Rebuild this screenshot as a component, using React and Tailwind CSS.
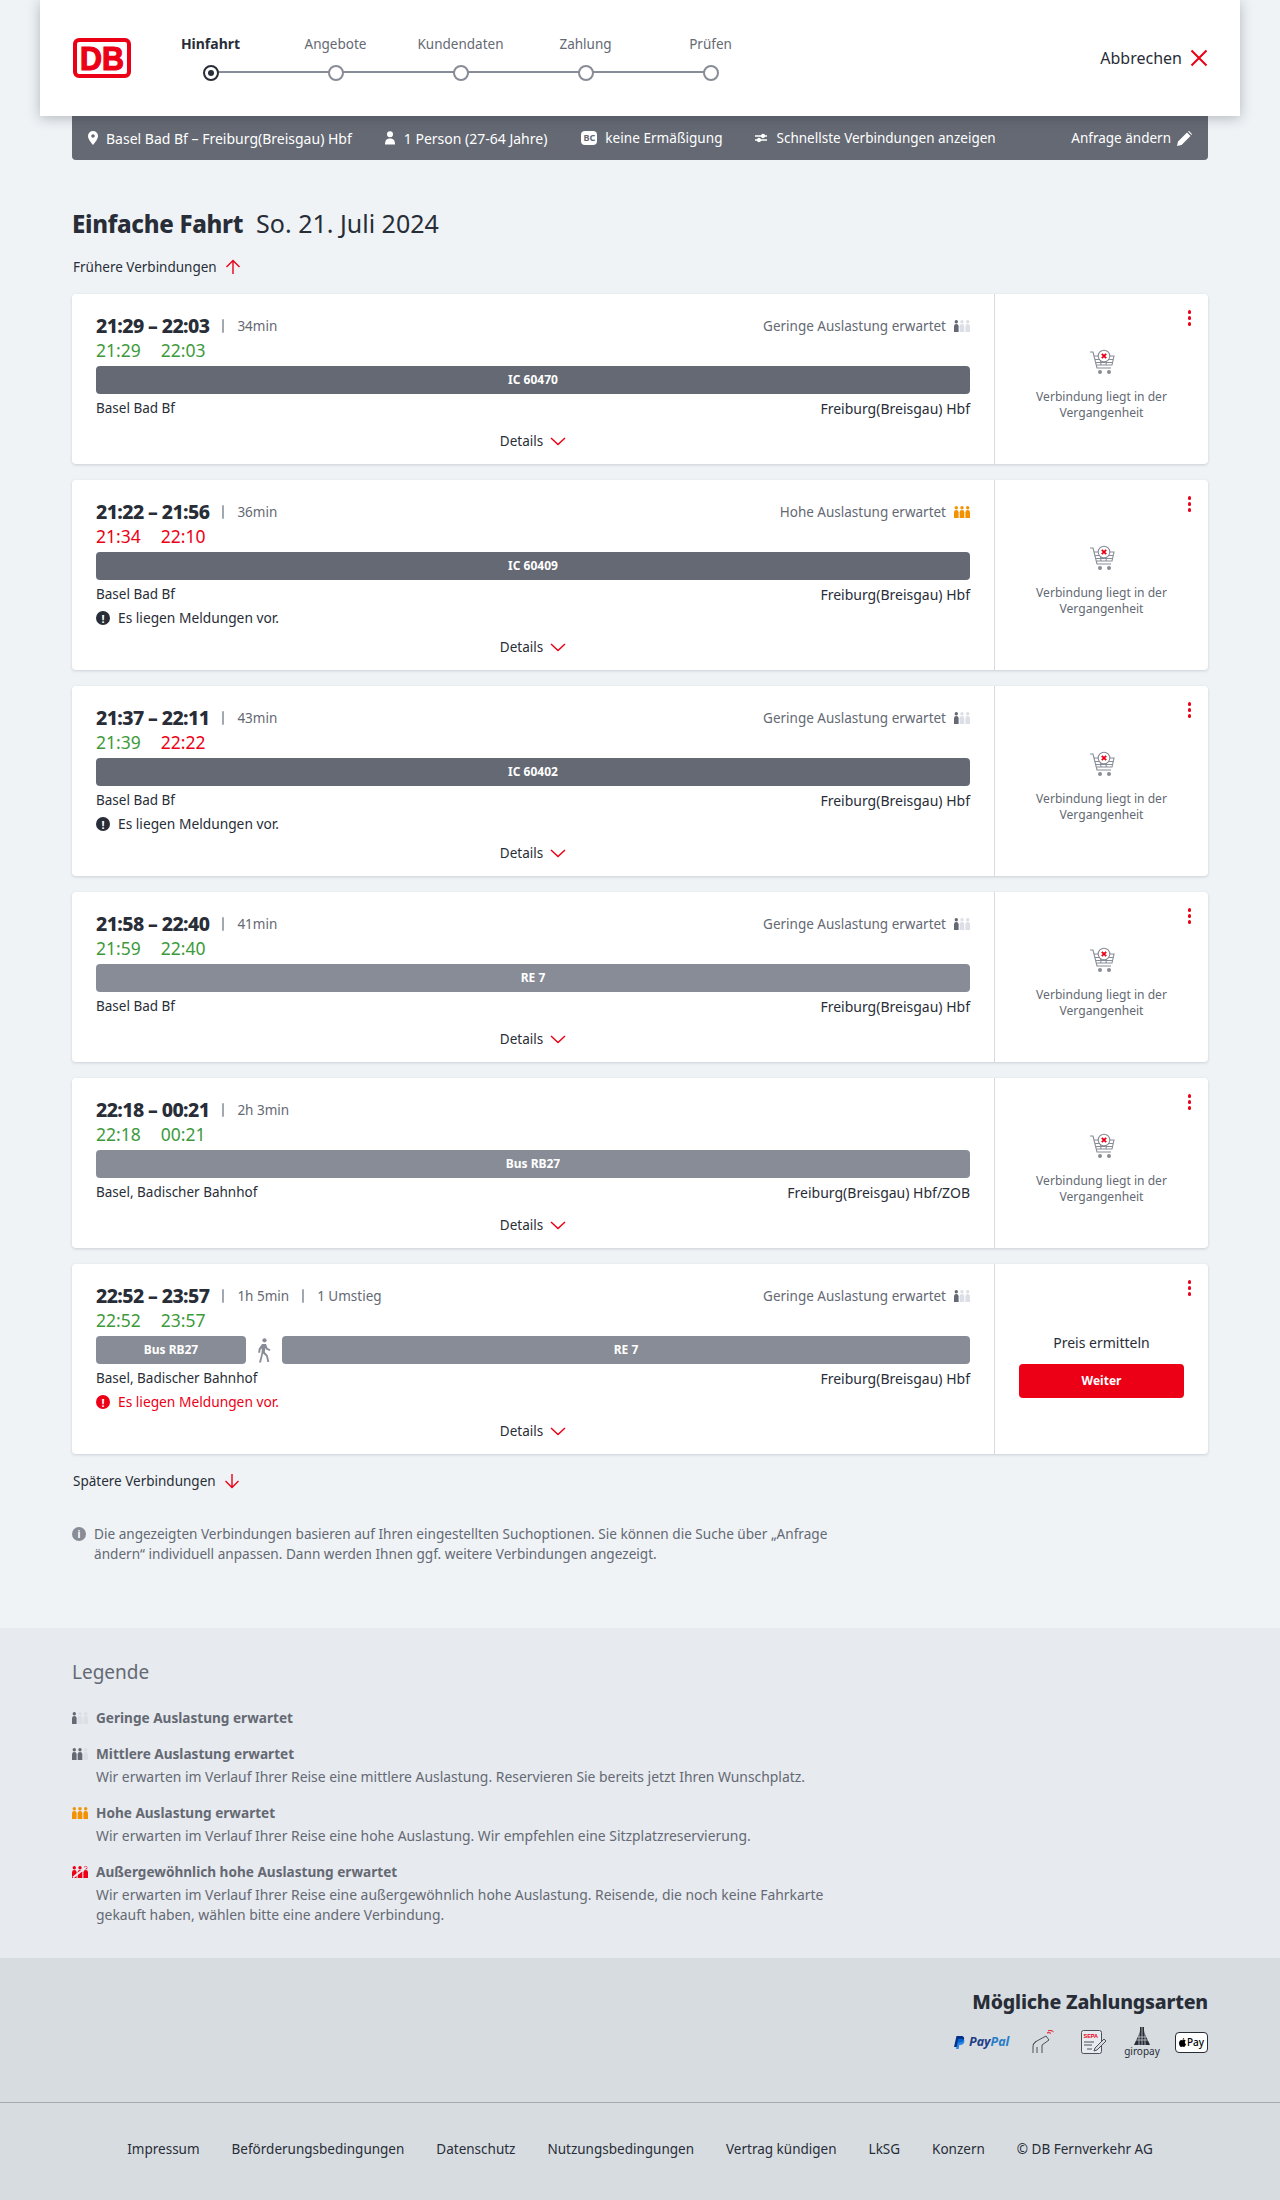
import React from "react";

const RED = "#ec0016";

const connections = [
  { time: "21:29 – 22:03", dur: "34min", load: "low", a: ["21:29", "g"], b: ["22:03", "g"], train: "IC 60470", dark: true, from: "Basel Bad Bf", to: "Freiburg(Breisgau) Hbf" },
  { time: "21:22 – 21:56", dur: "36min", load: "high", a: ["21:34", "r"], b: ["22:10", "r"], train: "IC 60409", dark: true, from: "Basel Bad Bf", to: "Freiburg(Breisgau) Hbf", msg: "dark" },
  { time: "21:37 – 22:11", dur: "43min", load: "low", a: ["21:39", "g"], b: ["22:22", "r"], train: "IC 60402", dark: true, from: "Basel Bad Bf", to: "Freiburg(Breisgau) Hbf", msg: "dark" },
  { time: "21:58 – 22:40", dur: "41min", load: "low", a: ["21:59", "g"], b: ["22:40", "g"], train: "RE 7", from: "Basel Bad Bf", to: "Freiburg(Breisgau) Hbf" },
  { time: "22:18 – 00:21", dur: "2h 3min", a: ["22:18", "g"], b: ["00:21", "g"], train: "Bus RB27", from: "Basel, Badischer Bahnhof", to: "Freiburg(Breisgau) Hbf/ZOB" },
  { time: "22:52 – 23:57", dur: "1h 5min", extra: "1 Umstieg", load: "low", a: ["22:52", "g"], b: ["23:57", "g"], train: "RE 7", bus: "Bus RB27", from: "Basel, Badischer Bahnhof", to: "Freiburg(Breisgau) Hbf", msg: "red", open: true },
];

const Logo = () => (
  <svg width="58" height="40" viewBox="0 0 58 40" className="shrink-0">
    <rect x="2" y="2" width="54" height="36" rx="4" fill="#fff" stroke={RED} strokeWidth="4" />
    <text x="29" y="31.500" textAnchor="middle" textLength="44" lengthAdjust="spacingAndGlyphs" fontFamily="'Liberation Sans', sans-serif" fontWeight="700" fontSize="33" fill={RED} stroke={RED} strokeWidth="1.200">DB</text>
  </svg>
);

const Person = ({ x, fill }) => (
  <g fill={fill}>
    <circle cx={x + 2.3} cy="1.7" r="1.7" />
    <path d={`M${x} 6.2a2.3 2.3 0 0 1 4.6 0V12H${x}z`} />
  </g>
);

const Load = ({ level }) => {
  const on = level === "high" ? "#f39200" : level === "extreme" ? RED : "#646973";
  const count = level === "low" ? 1 : level === "mid" ? 2 : 3;
  const off = "#dcdfe5";
  return (
    <svg width="16" height="12" viewBox="0 0 16 12" className="shrink-0">
      <Person x={0} fill={on} />
      <Person x={5.7} fill={count > 1 ? on : off} />
      <Person x={11.4} fill={count > 2 ? on : off} />
      {level === "extreme" && (
        <path d="M1 11.5 14.5 1" stroke="#e7eaef" strokeWidth="2" />
      )}
    </svg>
  );
};

const Chevron = () => (
  <svg width="16" height="9" viewBox="0 0 16 9" fill="none" stroke={RED} strokeWidth="1.5">
    <path d="M1 1l7 6.5L15 1" />
  </svg>
);

const Arrow = ({ down }) => (
  <svg width="16" height="16" viewBox="0 0 16 16" fill="none" stroke={RED} strokeWidth="1.4" className={down ? "rotate-180" : ""}>
    <path d="M8 15V1.5M1.5 8 8 1.5 14.5 8" />
  </svg>
);

const Kebab = () => (
  <div className="absolute top-4 right-[17px] flex flex-col gap-[2.5px]">
    <span className="w-[3.5px] h-[3.5px] rounded-full bg-[#ec0016]" />
    <span className="w-[3.5px] h-[3.5px] rounded-full bg-[#ec0016]" />
    <span className="w-[3.5px] h-[3.5px] rounded-full bg-[#ec0016]" />
  </div>
);

const Cart = () => (
  <svg width="26" height="26" viewBox="0 0 26 26" fill="none" stroke="#878c96" strokeWidth="1.1">
    <path d="M1 3h3l4 16h14" />
    <path d="M5 7h20l-2 9H7.5M6 10.5h18M7 13.5h17M11 7l1 9M18 7l-1 9" />
    <circle cx="15" cy="7" r="5.8" fill="#fff" />
    <path d="M12.8 4.8l4.4 4.4M17.2 4.8l-4.4 4.4" stroke={RED} strokeWidth="1.8" />
    <circle cx="11" cy="23" r="2" fill="#878c96" stroke="none" />
    <circle cx="20" cy="23" r="2" fill="#878c96" stroke="none" />
  </svg>
);

const Walk = () => (
  <svg width="14" height="25" viewBox="0 0 14 25" fill="#878c96">
    <circle cx="7.5" cy="2.3" r="2.1" />
    <path d="M5 6h4l1.5 4 3 1.5-.7 1.5-3.6-1.600-.8-1.400-.6 4 3 3.400 1.500 6.600H10.400l-1.300-5.700-3-2.900L4 24.500H2l2.300-8.500.7-5.500-1.500 1.200-.4 3H1.200l.5-4z" />
  </svg>
);

const AlertDot = ({ color }) => (
  <span className="w-3.5 h-3.5 rounded-full flex items-center justify-center shrink-0 text-white text-[11px] font-bold leading-none" style={{ backgroundColor: color }}>!</span>
);

const Sep = () => <span className="block w-0.5 h-3.5 bg-[#a3a7af] rounded-sm" />;

const Step = ({ label, active, last }) => (
  <div className="w-[125px] flex flex-col items-center relative">
    <span className={`leading-6 h-6 -mt-[1px] ${active ? "text-[14px] font-bold text-[#282d37]" : "text-[13.5px] text-[#646973]"}`}>{label}</span>
    {!last && <span className="absolute left-[62px] top-[38px] w-[125px] h-0.5 bg-[#878c96]" />}
    <span className={`relative mt-[9px] w-4 h-4 rounded-full border-2 bg-white flex items-center justify-center ${active ? "border-[#282d37]" : "border-[#878c96]"}`}>
      {active && <span className="w-1.5 h-1.5 rounded-full bg-[#282d37]" />}
    </span>
  </div>
);

const Header = () => (
  <header className="relative z-10 mx-10 h-[116px] bg-white shadow-[0_2px_12px_rgba(40,45,55,0.3)] flex items-center pl-[33px] pr-8">
    <Logo />
    <div className="flex ml-[17px] -mt-[2px]">
      <Step label="Hinfahrt" active />
      <Step label="Angebote" />
      <Step label="Kundendaten" />
      <Step label="Zahlung" />
      <Step label="Prüfen" last />
    </div>
    <div className="ml-auto flex items-center gap-[8px] text-[16px] text-[#282d37]">
      Abbrechen
      <svg width="18" height="18" viewBox="0 0 18 18" stroke={RED} strokeWidth="2"><path d="M1.500 1.500l15 15M16.500 1.500l-15 15" /></svg>
    </div>
  </header>
);

const SearchBar = () => (
  <div className="mx-[72px] h-11 bg-[#646973] rounded-b text-white text-[14px] flex items-center pl-4 pr-4">
    <svg width="10" height="14" viewBox="0 0 10 14" fill="#fff"><path fillRule="evenodd" d="M5 0a5 5 0 0 1 5 5c0 3-3 6.500-5 9-2-2.500-5-6-5-9a5 5 0 0 1 5-5zm0 3.200a1.800 1.800 0 1 0 0 3.600 1.800 1.800 0 0 0 0-3.600z" /></svg>
    <span className="ml-2">Basel Bad Bf – Freiburg(Breisgau) Hbf</span>
    <svg className="ml-[32px]" width="12" height="14" viewBox="0 0 12 14" fill="#fff"><circle cx="6" cy="3.200" r="3" /><path d="M1 13.500c0-4 1.500-6 5-6s5 2 5 6z" /></svg>
    <span className="ml-2">1 Person (27-64 Jahre)</span>
    <span className="ml-[34px] w-4 h-3.5 bg-white rounded-sm text-[#646973] text-[9px] font-bold leading-[14px] text-center">BC</span>
    <span className="ml-2 text-[13.600px]">keine Ermäßigung</span>
    <svg className="ml-[32px]" width="12" height="10" viewBox="0 0 12 10" fill="none" stroke="#fff" strokeWidth="1.300"><path d="M0 3h12M0 7h12" /><circle cx="8" cy="3" r="1.500" fill="#fff" /><circle cx="4" cy="7" r="1.500" fill="#fff" /></svg>
    <span className="ml-[10px] text-[13.500px]">Schnellste Verbindungen anzeigen</span>
    <span className="ml-auto text-[13.500px]">Anfrage ändern</span>
    <svg className="ml-[6px]" width="15" height="15" viewBox="0 0 15 15" fill="#fff"><path d="M0 15l1-4.500L10 1.500 13.500 5l-9 9zM11 .5l1-.5 3 3-.5 1z" /></svg>
  </div>
);

const Card = ({ c }) => (
  <div className="bg-white rounded flex shadow-[0_1px_3px_rgba(40,45,55,0.18)]">
    <div className="w-[922px] px-6 pt-5 pb-[13px] flex flex-col">
      <div className="h-6 flex items-center">
        <span className="text-[19.500px] font-extrabold text-[#282d37] tracking-[-0.6px]">{c.time}</span>
        <span className="mx-[13px]"><Sep /></span>
        <span className="text-[13.500px] text-[#646973]">{c.dur}</span>
        {c.extra && <span className="mx-[13px]"><Sep /></span>}
        {c.extra && <span className="text-[13.500px] text-[#646973]">{c.extra}</span>}
        {c.load && (
          <span className="ml-auto flex items-center gap-2 text-[13.500px] text-[#646973]">
            {c.load === "high" ? "Hohe Auslastung erwartet" : "Geringe Auslastung erwartet"}
            <Load level={c.load} />
          </span>
        )}
      </div>
      <div className="h-6 flex items-center gap-5 text-[17.500px]">
        <span className={c.a[1] === "g" ? "text-[#3d9a3a]" : "text-[#ec0016]"}>{c.a[0]}</span>
        <span className={c.b[1] === "g" ? "text-[#3d9a3a]" : "text-[#ec0016]"}>{c.b[0]}</span>
      </div>
      <div className="mt-1 flex items-center">
        {c.bus && (
          <>
            <div className="w-[150px] h-7 rounded bg-[#878c96] text-white text-[12px] font-bold flex items-center justify-center">{c.bus}</div>
            <div className="w-9 flex justify-center"><Walk /></div>
          </>
        )}
        <div className={`flex-1 h-7 rounded text-white text-[12px] font-bold flex items-center justify-center ${c.dark ? "bg-[#646973]" : "bg-[#878c96]"}`}>{c.train}</div>
      </div>
      <div className="mt-1 h-5 flex items-center justify-between text-[#282d37]">
        <span className="text-[13.500px]">{c.from}</span>
        <span className="text-[14px]">{c.to}</span>
      </div>
      {c.msg && (
        <div className={`mt-1 h-5 flex items-center gap-2 text-[13.750px] ${c.msg === "red" ? "text-[#ec0016]" : "text-[#282d37]"}`}>
          <AlertDot color={c.msg === "red" ? RED : "#282d37"} />
          Es liegen Meldungen vor.
        </div>
      )}
      <div className={`${c.msg ? "mt-[9px]" : "mt-[13px]"} h-5 flex items-center justify-center gap-[7px] text-[13.500px] text-[#282d37]`}>
        Details
        <Chevron />
      </div>
    </div>
    <div className="relative flex-1 border-l border-[#d7dce1] flex flex-col items-center justify-center">
      <Kebab />
      {c.open ? (
        <div className="w-full px-6 flex flex-col items-center pt-[12px]">
          <span className="text-[14px] text-[#282d37] h-5 leading-5">Preis ermitteln</span>
          <span className="mt-[11px] w-[165px] h-[34px] rounded bg-[#ec0016] text-white text-[12px] font-bold flex items-center justify-center">Weiter</span>
        </div>
      ) : (
        <div className="flex flex-col items-center pt-[12px]">
          <Cart />
          <p className="mt-[14px] w-[150px] text-center text-[12.100px] leading-4 text-[#646973]">Verbindung liegt in der Vergangenheit</p>
        </div>
      )}
    </div>
  </div>
);

const LegendItem = ({ level, title, children }) => (
  <div>
    <div className="h-5 flex items-center gap-2 text-[13.600px] font-bold text-[#646973]">
      <Load level={level} />
      {title}
    </div>
    {children && <p className="pl-6 mt-[3px] text-[13.900px] leading-5 text-[#646973]">{children}</p>}
  </div>
);

const Legend = () => (
  <section className="bg-[#e7eaef] h-[330px] px-[72px] pt-[32px]">
    <h2 className="text-[19px] leading-6 text-[#646973]">Legende</h2>
    <div className="mt-[24px] flex flex-col gap-4">
      <LegendItem level="low" title="Geringe Auslastung erwartet" />
      <LegendItem level="mid" title="Mittlere Auslastung erwartet">
        Wir erwarten im Verlauf Ihrer Reise eine mittlere Auslastung. Reservieren Sie bereits jetzt Ihren Wunschplatz.
      </LegendItem>
      <LegendItem level="high" title="Hohe Auslastung erwartet">
        Wir erwarten im Verlauf Ihrer Reise eine hohe Auslastung. Wir empfehlen eine Sitzplatzreservierung.
      </LegendItem>
      <LegendItem level="extreme" title="Außergewöhnlich hohe Auslastung erwartet">
        Wir erwarten im Verlauf Ihrer Reise eine außergewöhnlich hohe Auslastung. Reisende, die noch keine Fahrkarte<br />
        gekauft haben, wählen bitte eine andere Verbindung.
      </LegendItem>
    </div>
  </section>
);

const PayPal = () => (
  <div className="flex items-center gap-1 w-14 h-3.5">
    <svg width="11" height="13" viewBox="0 0 11 13" className="shrink-0">
      <path d="M2.500 0H7c3 0 3.500 2 3 3.500C9.300 5.800 7.500 6.500 5.500 6.500H4L3 11H0z" fill="#003087" />
      <path d="M4 3h4c1.800 0 2.800 1.200 2.300 3-.5 2-2 3-4 3H5.300L4.600 13H2z" fill="#0070e0" opacity="0.8" />
    </svg>
    <span className="text-[12.500px] font-bold italic leading-none text-[#1f3f88]">Pay<span className="text-[#2a7cc7]">Pal</span></span>
  </div>
);

const Payments = () => (
  <section className="bg-[#d7dce1] h-[145px] px-[72px] pt-[32px] flex flex-col items-end border-b border-[#a5a9b0]">
    <h2 className="text-[19.500px] leading-6 font-extrabold tracking-[-0.2px] text-[#282d37]">Mögliche Zahlungsarten</h2>
    <div className="mt-[13px] h-[30px] flex items-center">
      <PayPal />
      <svg className="ml-[22px]" width="22" height="24" viewBox="0 0 22 24" fill="none" stroke="#4b505a" strokeWidth="1">
        <path d="M1 23v-6c0-3 1-4 3-5.500L14 6l3 4-7 5v8M5 23v-6M1 15l3-4" />
        <path d="M15 3c1.500-.5 3-.5 4 .5M16 .8c2-.5 4-.3 5.500 1" stroke={RED} />
      </svg>
      <svg className="ml-[27px]" width="26" height="24" viewBox="0 0 26 24" fill="none" stroke="#4b505a" strokeWidth="1">
        <rect x=".5" y=".5" width="20" height="23" rx="2" fill="#e7eaef" />
        <text x="2.500" y="8" fontSize="5.500" fontWeight="700" fill={RED} stroke="none" fontFamily="'Liberation Sans', sans-serif">SEPA</text>
        <path d="M3 12h10M3 15h8M6 19h5" />
        <path d="M14 18l9-9 2 2-9 9-3 1z" fill="#d7dce1" />
      </svg>
      <div className="ml-[17px] w-[36px] flex flex-col items-center">
        <svg width="16" height="18" viewBox="0 0 16 18" fill="#282d37">
          <path d="M6 0h4v4l1 3 5 11H0L5 7l1-3z" />
          <path d="M2 10h12M1 13h14M5 5v13M8 0v18M11 5v13" stroke="#d7dce1" strokeWidth=".7" />
        </svg>
        <span className="text-[10px] leading-3 text-[#282d37]">giropay</span>
      </div>
      <div className="ml-[15px] w-[33px] h-[21px] bg-white border border-[#282d37] rounded-sm flex items-center justify-center gap-[1px] text-[10px] font-medium leading-none text-black">
        <svg width="7" height="9" viewBox="0 0 7 9" fill="#000"><path d="M5.200 0c0 1-.7 1.800-1.600 1.800C3.600.9 4.300.1 5.200 0zM3.500 2.200c.5 0 1-.4 1.600-.4.700 0 1.300.3 1.600.900-1.300.8-1.100 2.700.3 3.300C6.600 7 5.800 9 4.900 9c-.6 0-.8-.4-1.400-.4S2.700 9 2.200 9C1.100 9 0 6.800 0 5.200c0-2 1.200-3.300 2.300-3.300.5 0 .9.300 1.200.300z" /></svg>
        Pay
      </div>
    </div>
  </section>
);

const Footer = () => (
  <footer className="bg-[#d7dce1] h-[97px] pb-[5px] flex items-center justify-center gap-8 text-[13.500px] text-[#282d37]">
    <span>Impressum</span>
    <span>Beförderungsbedingungen</span>
    <span>Datenschutz</span>
    <span>Nutzungsbedingungen</span>
    <span>Vertrag kündigen</span>
    <span>LkSG</span>
    <span>Konzern</span>
    <span>© DB Fernverkehr AG</span>
  </footer>
);

export default function App() {
  return (
    <div className="bg-[#eff3f6] font-['Noto_Sans',sans-serif] w-[1280px]">
      <Header />
      <SearchBar />
      <main className="px-[72px] pb-16">
        <div className="mt-[44px] h-10 flex items-center gap-[13px] text-[#282d37]">
          <h1 className="text-[24px] font-extrabold tracking-[-0.3px]">Einfache Fahrt</h1>
          <span className="text-[25px]">So. 21. Juli 2024</span>
        </div>
        <div className="mt-[11px] h-6 flex items-center gap-2 pl-px text-[13.500px] text-[#282d37]">
          Frühere Verbindungen
          <Arrow />
        </div>
        <div className="mt-[15px] flex flex-col gap-4">
          {connections.map((c) => <Card key={c.time} c={c} />)}
        </div>
        <div className="mt-[15px] h-6 flex items-center gap-2 pl-px text-[13.500px] text-[#282d37]">
          Spätere Verbindungen
          <Arrow down />
        </div>
        <div className="mt-[31px] flex gap-2 text-[13.600px] leading-5 text-[#646973]">
          <span className="mt-[3px] w-3.5 h-3.5 rounded-full bg-[#878c96] text-white text-[10px] font-bold leading-[14px] text-center shrink-0">i</span>
          <p>
            Die angezeigten Verbindungen basieren auf Ihren eingestellten Suchoptionen. Sie können die Suche über „Anfrage<br />
            ändern“ individuell anpassen. Dann werden Ihnen ggf. weitere Verbindungen angezeigt.
          </p>
        </div>
      </main>
      <Legend />
      <Payments />
      <Footer />
    </div>
  );
}
